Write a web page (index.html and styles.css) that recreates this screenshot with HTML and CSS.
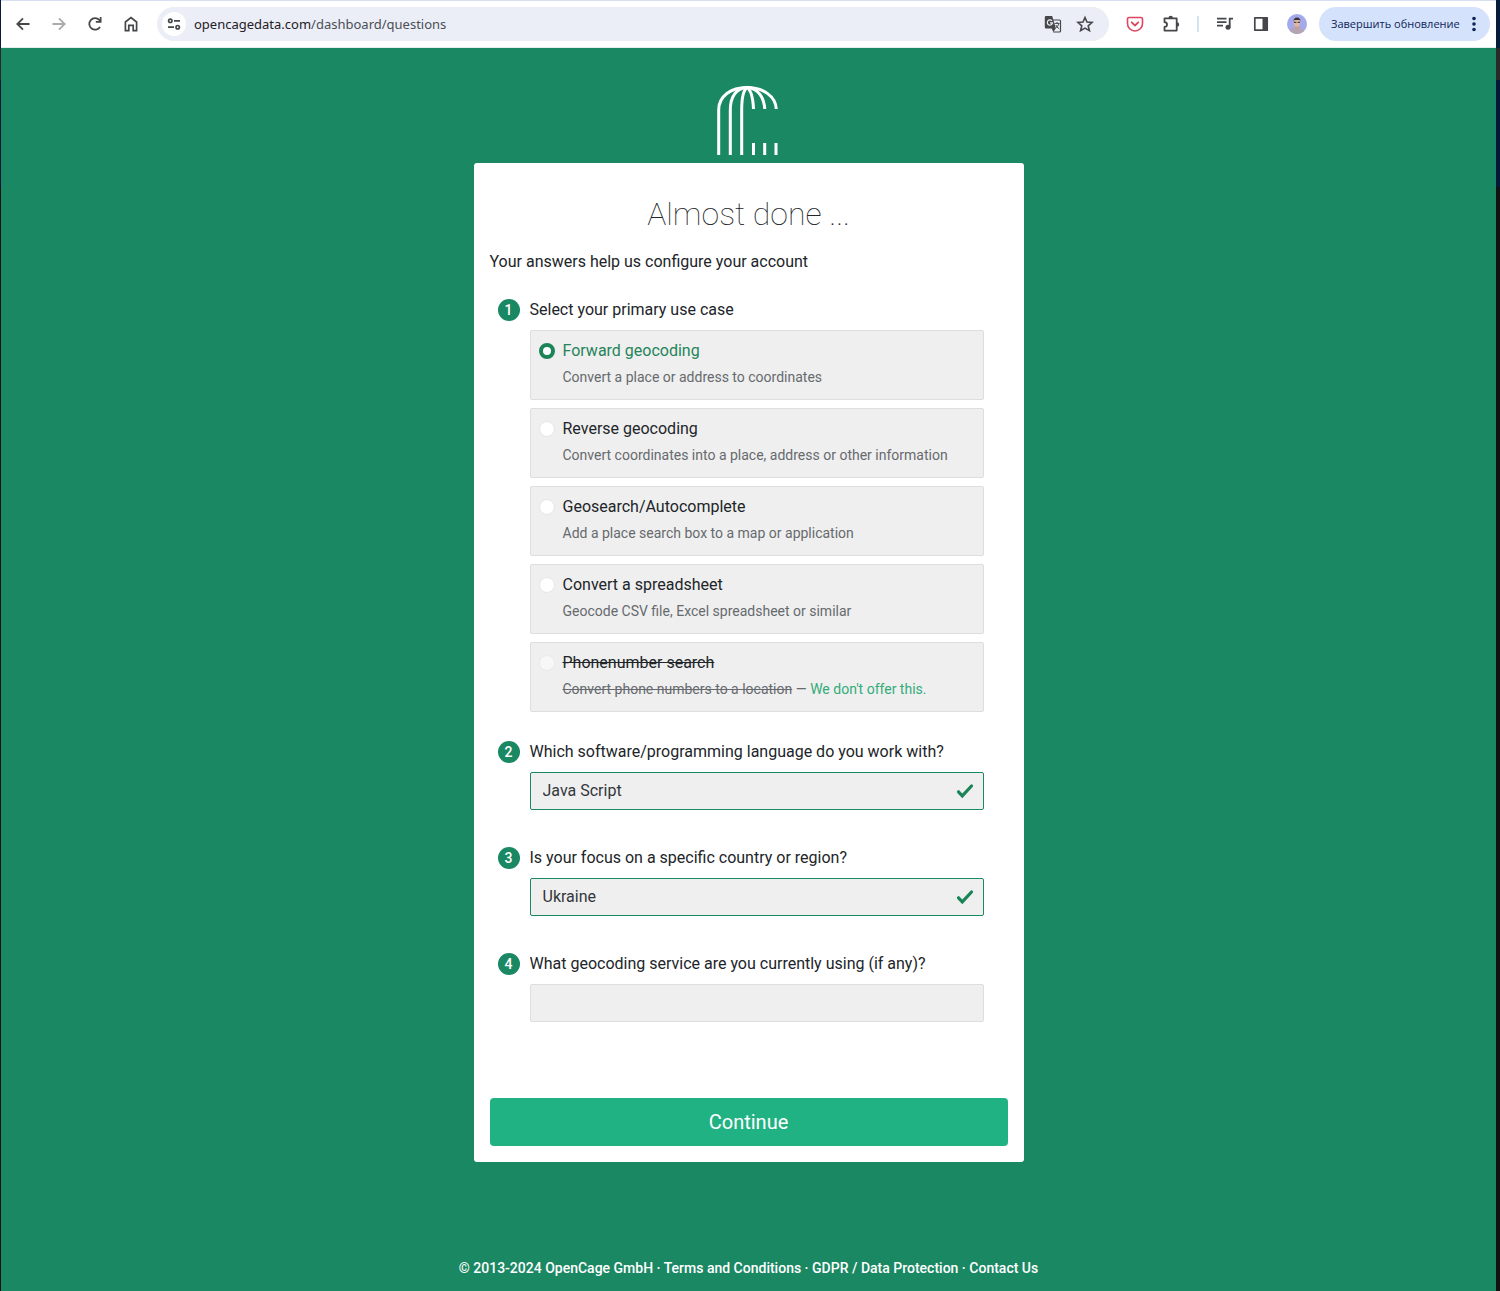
FILE: index.html
```html
<!DOCTYPE html>
<html lang="en">
<head>
<meta charset="utf-8">
<meta name="viewport" content="width=device-width, initial-scale=1">
<title>OpenCage - Questions</title>
<link rel="stylesheet" href="styles.css">
</head>
<body>
<div class="window">
  <header class="toolbar">
    <nav class="tools" aria-label="Navigation">
      <button class="tool" type="button" aria-label="Back"><svg viewBox="0 0 20 20"><path d="M16.5 10H4.6M10 4.3 4.3 10l5.7 5.7" fill="none" stroke="currentColor" stroke-width="1.8"/></svg></button>
      <button class="tool tool-off" type="button" aria-label="Forward"><svg viewBox="0 0 20 20"><path d="M3.5 10h11.9M10 4.3l5.7 5.7-5.7 5.7" fill="none" stroke="currentColor" stroke-width="1.8"/></svg></button>
      <button class="tool" type="button" aria-label="Reload"><svg viewBox="0 0 20 20"><path d="M15 13a5.8 5.8 0 1 1-.7-7.1L15.600 7.400" fill="none" stroke="currentColor" stroke-width="1.8"/><path d="M16.500 3v5.700h-5.700V7h4V3z" fill="currentColor"/></svg></button>
      <button class="tool" type="button" aria-label="Home"><svg viewBox="0 0 20 20"><path d="M4.400 16.600V8L10 3.600 15.600 8v8.600h-3.400v-5.200H7.800v5.200z" fill="none" stroke="currentColor" stroke-width="1.700"/></svg></button>
    </nav>
    <div class="omnibox">
      <button class="site-info" type="button" aria-label="Site information"><svg viewBox="0 0 16 16"><g fill="none" stroke="currentColor" stroke-width="1.700"><circle cx="4.300" cy="4.800" r="1.700"/><path d="M8 4.800h6M2 11.200h6"/><circle cx="11.700" cy="11.200" r="1.700"/></g></svg></button>
      <div class="address">opencagedata.com<span class="address-path">/dashboard/questions</span></div>
      <button class="box-tool" type="button" aria-label="Translate"><svg viewBox="0 0 20 20"><path d="M8 6h8.500a1 1 0 0 1 1 1v10a1 1 0 0 1-1 1h-6.300" fill="none" stroke="currentColor" stroke-width="1.200"/><path d="M3 2h6.200l3.700 12.500H3a1.200 1.200 0 0 1-1.200-1.200V3.200A1.200 1.200 0 0 1 3 2zM8.600 14.500h4.200L10.400 18z" fill="currentColor"/><path d="M9 7A2.600 2.600 0 1 0 9.500 8.900H7" fill="none" stroke="#ebeef7" stroke-width="1.200"/><path d="M11.500 9.400h5M14 8v1.400M15.700 9.500c-.3 2-1.500 3.500-3 4.300M12.800 11c.6 1.500 1.700 2.700 3.300 3.700" fill="none" stroke="currentColor"/></svg></button>
      <button class="box-tool" type="button" aria-label="Bookmark this page"><svg viewBox="0 0 20 20"><path d="m10 3.500 2 4.600 5 .4-3.800 3.300 1.200 4.900-4.400-2.600-4.400 2.600 1.200-4.900L3 8.500l5-.4z" fill="none" stroke="currentColor" stroke-width="1.600"/></svg></button>
    </div>
    <div class="tools">
      <button class="tool tool-pocket" type="button" aria-label="Pocket"><svg viewBox="0 0 20 20"><path d="M4 3.500h12A1.500 1.500 0 0 1 17.500 5v4.500a7.500 7.500 0 0 1-15 0V5A1.500 1.500 0 0 1 4 3.500z" fill="none" stroke="currentColor" stroke-width="1.600"/><path d="m6.700 8.300 3.300 3.200 3.300-3.200" fill="none" stroke="currentColor" stroke-width="1.800" stroke-linecap="round" stroke-linejoin="round"/></svg></button>
      <button class="tool" type="button" aria-label="Extensions"><svg viewBox="0 0 20 20"><path d="M3.500 4.400h12.200v12.200H3.500v-3.700c1.600 0 2.500-1 2.500-2.400S5.100 8.100 3.500 8.100z" fill="none" stroke="currentColor" stroke-width="1.800" stroke-linejoin="round"/><path d="M7.500 4a2.200 2.200 0 0 1 4.400 0zM16 8.300a2.200 2.200 0 0 1 0 4.400z" fill="currentColor"/></svg></button>
      <span class="divider"></span>
      <button class="tool" type="button" aria-label="Media controls"><svg viewBox="0 0 20 20"><path d="M2 4.600h9.500M2 8.100h9.500M2 11.600h6M14.700 4v9.500M14 4.700h4" fill="none" stroke="currentColor" stroke-width="1.800"/><circle cx="13" cy="13.300" r="2.500" fill="currentColor"/></svg></button>
      <button class="tool" type="button" aria-label="Side panel"><svg viewBox="0 0 20 20"><path d="M3.800 3.800h12.400v12.400H3.800z" fill="none" stroke="currentColor" stroke-width="1.700" stroke-linejoin="round"/><path d="M11.500 3.500H16v13h-4.500z" fill="currentColor"/></svg></button>
      <button class="tool" type="button" aria-label="Profile"><svg viewBox="0 0 20 20"><circle cx="10" cy="10" r="10" fill="#a4a9ec"/><path d="M2.800 17c1-3.300 4-3.800 7.200-3.800s6.200.5 7.200 3.800a10 10 0 0 1-14.400 0z" fill="#b3a5b3"/><path d="M8 11h4v3l-2 1.700L8 14z" fill="#c99f89"/><ellipse cx="10" cy="8.500" rx="3.200" ry="4.200" fill="#dfb7a2"/><path d="M6.600 7.600C6.300 5 7.600 3.400 10 3.400s3.700 1.600 3.400 4.200L12.600 6H7.400z" fill="#3c3339"/><path d="M7 8.400h2.400M10.600 8.400H13" stroke="#4a4050" stroke-width="1.100"/></svg></button>
    </div>
    <button class="update" type="button">Завершить обновление<svg viewBox="0 0 4 16"><g fill="currentColor"><circle cx="2" cy="2.500" r="1.800"/><circle cx="2" cy="8" r="1.800"/><circle cx="2" cy="13.500" r="1.800"/></g></svg></button>
  </header>

  <main class="page">
    <svg class="logo" viewBox="0 0 64 70" role="img" aria-label="OpenCage"><g fill="none" stroke="#fff" stroke-width="3"><path d="M1.700 70V25C1.700 11 14 2.500 30 2.500S58.500 11 59.300 24"/><path d="M13.300 70V25C13.300 12 19 3 30 2.500c11 .5 17 10 17.800 21.500"/><path d="M24.700 70V25c0-12 2-20 5.300-22.500C34 5 36 13 36.500 24"/><path d="M36.500 58v12M47.700 58v12M59 58v12"/></g></svg>

    <form class="card">
      <h1 class="title">Almost done ...</h1>
      <p class="intro">Your answers help us configure your account</p>

      <fieldset class="question">
        <legend class="prompt"><span class="number">1</span>Select your primary use case</legend>
        <div class="options">
          <label class="option"><input class="radio" type="radio" name="usecase" checked><span class="option-text"><span class="option-name">Forward geocoding</span><span class="option-note">Convert a place or address to coordinates</span></span></label>
          <label class="option"><input class="radio" type="radio" name="usecase"><span class="option-text"><span class="option-name">Reverse geocoding</span><span class="option-note">Convert coordinates into a place, address or other information</span></span></label>
          <label class="option"><input class="radio" type="radio" name="usecase"><span class="option-text"><span class="option-name">Geosearch/Autocomplete</span><span class="option-note">Add a place search box to a map or application</span></span></label>
          <label class="option"><input class="radio" type="radio" name="usecase"><span class="option-text"><span class="option-name">Convert a spreadsheet</span><span class="option-note">Geocode CSV file, Excel spreadsheet or similar</span></span></label>
          <label class="option"><input class="radio" type="radio" name="usecase" disabled><span class="option-text"><span class="option-name"><s>Phonenumber search</s></span><span class="option-note"><s>Convert phone numbers to a location</s> — <a class="option-link" href="#phone">We don't offer this.</a></span></span></label>
        </div>
      </fieldset>

      <div class="question">
        <label class="prompt" for="language"><span class="number">2</span>Which software/programming language do you work with?</label>
        <div class="field field-valid"><input class="field-input" id="language" type="text" value="Java Script"><svg class="check" viewBox="0 0 18 16"><path d="m2.500 8.800 3.800 4L15.500 3" fill="none" stroke="currentColor" stroke-width="3.200" stroke-linecap="round"/></svg></div>
      </div>

      <div class="question">
        <label class="prompt" for="region"><span class="number">3</span>Is your focus on a specific country or region?</label>
        <div class="field field-valid"><input class="field-input" id="region" type="text" value="Ukraine"><svg class="check" viewBox="0 0 18 16"><path d="m2.500 8.800 3.800 4L15.500 3" fill="none" stroke="currentColor" stroke-width="3.200" stroke-linecap="round"/></svg></div>
      </div>

      <div class="question">
        <label class="prompt" for="service"><span class="number">4</span>What geocoding service are you currently using (if any)?</label>
        <div class="field"><input class="field-input" id="service" type="text"></div>
      </div>

      <button class="continue" type="submit">Continue</button>
    </form>
  </main>

  <footer class="footer">© 2013-2024 OpenCage GmbH · <a href="#terms">Terms and Conditions</a> · <a href="#gdpr">GDPR / Data Protection</a> · <a href="#contact">Contact Us</a></footer>
</div>
</body>
</html>
```
FILE: styles.css
```css
*,
*::before,
*::after {
  box-sizing: border-box;
}

body {
  margin: 0;
  padding: 0 4px 0 1px;
  background: linear-gradient(#061c3c 48px, #292929 48px, #292929 80px, #06183a 80px, #06183a 187px, #121212 187px);
  color: #212529;
  font: 16px/24px Roboto, "Liberation Sans", sans-serif;
}

button,
input {
  font: inherit;
}

button {
  margin: 0;
  padding: 0;
  border: 0;
  background: none;
  color: inherit;
}

.window {
  display: flex;
  flex-direction: column;
  min-height: 100vh;
  background: #1b8864;
}

/* Browser toolbar */

.toolbar {
  display: flex;
  align-items: center;
  height: 48px;
  padding: 0 6px 0 4px;
  border-top: 1px solid #d6e0f2;
  border-bottom: 1px solid #e3efeb;
  background: #fff;
  color: #45474a;
  font: 13px/20px "Noto Sans", sans-serif;
}

.tools {
  display: flex;
  align-items: center;
}

.tool {
  display: flex;
  justify-content: center;
  width: 36px;
}

.tool svg {
  width: 20px;
  height: 20px;
}

.tool-off {
  color: #a9abad;
}

.tool-pocket {
  color: #e0455f;
}

.divider {
  width: 2px;
  height: 16px;
  margin: 0 8px;
  background: #d3e3f5;
}

.omnibox {
  display: flex;
  flex: 1;
  align-items: center;
  height: 34px;
  margin: 0 8px;
  padding: 0 14px 0 5px;
  border-radius: 17px;
  background: #ebeef7;
}

.site-info {
  display: flex;
  align-items: center;
  justify-content: center;
  width: 24px;
  height: 24px;
  border-radius: 50%;
  background: #fff;
}

.site-info svg {
  width: 16px;
  height: 16px;
}

.address {
  flex: 1;
  margin-left: 8px;
  color: #1f2024;
}

.address-path {
  color: #4c4e55;
}

.box-tool {
  display: flex;
  margin-left: 12px;
}

.box-tool svg {
  width: 20px;
  height: 20px;
}

.update {
  display: flex;
  align-items: center;
  justify-content: space-between;
  gap: 8px;
  min-width: 171px;
  height: 34px;
  margin-left: 4px;
  padding: 0 14px 0 12px;
  border-radius: 17px;
  background: #d5e2fb;
  color: #0b2559;
  font-family: "Open Sans", sans-serif;
  font-size: 11px;
  white-space: nowrap;
}

.update svg {
  width: 4px;
  height: 16px;
}

/* Questions page */

.page {
  display: flex;
  flex: 1;
  flex-direction: column;
  align-items: center;
  gap: 8px;
  padding-top: 37px;
}

.logo {
  width: 64px;
  height: 70px;
}

.card {
  width: 100%;
  max-width: 550px;
  padding: 32px 16px 16px;
  border-radius: 3px;
  background: #fff;
}

.title {
  margin: 0 0 16px;
  font-size: 32px;
  font-weight: 100;
  line-height: 39px;
  text-align: center;
}

.intro {
  margin: 0 0 24px;
}

.question {
  margin: 0 0 36px;
  padding: 0 24px 0 8px;
  border: 0;
}

fieldset.question {
  margin-bottom: 28px;
}

.prompt {
  display: flex;
  align-items: center;
  gap: 10px;
  margin-bottom: 8px;
  padding: 0;
}

.number {
  width: 22px;
  height: 22px;
  border-radius: 50%;
  background: #1b8864;
  color: #fff;
  font-size: 14px;
  font-weight: 500;
  line-height: 22px;
  text-align: center;
}

.options {
  display: grid;
  gap: 8px;
  margin-left: 32px;
}

.option {
  display: flex;
  gap: 8px;
  padding: 8px 8px 11px;
  border: 1px solid #dedede;
  border-radius: 2px;
  background: #efefef;
}

.radio {
  flex: none;
  width: 16px;
  height: 16px;
  margin: 4px 0;
  border: 1px solid #e6e6e6;
  border-radius: 50%;
  appearance: none;
  background: #fff;
}

.radio:checked {
  border: 4px solid #1b8457;
}

.radio:disabled {
  opacity: 0.5;
}

.option-text {
  display: grid;
  gap: 4px;
}

.radio:checked + .option-text .option-name {
  color: #24845a;
}

.option-note {
  color: #666a6e;
  font-size: 14px;
  line-height: 21px;
}

.option-link {
  color: #33ab7a;
  text-decoration: none;
}

.field {
  display: flex;
  align-items: center;
  height: 38px;
  margin-left: 32px;
  padding: 0 9px 0 12px;
  border: 1px solid #dedede;
  border-radius: 2px;
  background: #efefef;
}

.field-valid {
  border-color: #1b8864;
}

.field-input {
  flex: 1;
  min-width: 0;
  padding: 0;
  border: 0;
  outline: 0;
  background: none;
  color: #33373b;
}

.check {
  width: 18px;
  height: 16px;
  color: #1b8457;
}

.continue {
  display: block;
  width: 100%;
  margin-top: 76px;
  padding: 9px 16px;
  border-radius: 4px;
  background: #21b283;
  color: #fff;
  font-size: 20px;
  line-height: 30px;
}

.footer {
  padding: 96px 16px 12px;
  color: #fff;
  font-size: 14px;
  font-weight: 500;
  line-height: 21px;
  text-align: center;
}

.footer a {
  color: inherit;
  text-decoration: none;
}
```
